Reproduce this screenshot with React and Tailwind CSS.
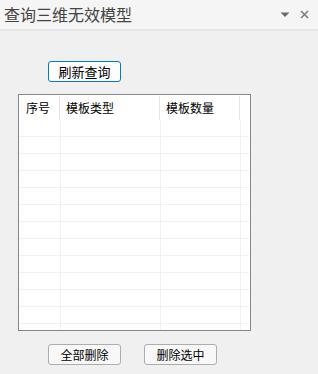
import React from "react";

const font = { fontFamily: '"Noto Sans CJK SC", "Noto Sans", sans-serif' };

function Btn({ children, primary, extra = "" }) {
  return (
    <div
      className={
        "h-[21px] w-[73px] flex items-center justify-center leading-none text-black rounded-[3px] " +
        (primary
          ? "border border-[#0078d7] bg-[#fdfdfd] text-[13px] "
          : "border border-[#adadad] bg-[#f8f8f8] text-[12px] ") +
        extra
      }
    >
      {children}
    </div>
  );
}

export default function App() {
  const rows = Array.from({ length: 13 });
  return (
    <div className="w-[318px] h-[374px] bg-[#f0f0f0] flex flex-col overflow-hidden" style={font}>
      <div className="h-[31px] shrink-0 bg-[#f5f5f5] border-b-2 border-[#e6e6e6] flex items-center pl-[4px] pr-[5px]">
        <div className="text-[16px] leading-none text-[#444] pb-[1px]">查询三维无效模型</div>
        <div className="flex-1" />
        <svg width="10" height="6" viewBox="0 0 10 6" className="mr-[10px] mt-[1px]">
          <path d="M0.5 0.5 L9.5 0.5 L5 5 Z" fill="#6b6b6b" />
        </svg>
        <svg width="9" height="9" viewBox="0 0 9 9" className="mr-[4px]">
          <path d="M1 1 L8 8 M8 1 L1 8" stroke="#7a7a7a" strokeWidth="1.5" />
        </svg>
      </div>

      <div className="ml-[48px] mt-[30px]">
        <Btn primary>刷新查询</Btn>
      </div>

      <div className="ml-[18px] mt-[12px] w-[233px] h-[237px] border border-[#828790] bg-white flex flex-col overflow-hidden shrink-0">
        <div className="h-[25px] shrink-0 flex text-[12px] leading-none text-black">
          <div className="w-[41px] flex items-center pl-[7px] relative">
            序号
            <div className="absolute right-0 top-[1px] bottom-0 w-px bg-[#e5e5e5]" />
          </div>
          <div className="w-[100px] flex items-center pl-[6px] relative">
            模板类型
            <div className="absolute right-0 top-[1px] bottom-0 w-px bg-[#e5e5e5]" />
          </div>
          <div className="w-[80px] flex items-center pl-[6px] relative">
            模板数量
            <div className="absolute right-0 top-[1px] bottom-0 w-px bg-[#e5e5e5]" />
          </div>
          <div className="flex-1" />
        </div>
        <div className="flex-1 flex flex-col">
          {rows.map((_, i) => (
            <div key={i} className="h-[17px] shrink-0 flex border-b border-[#f0f0f0] mr-[1px]">
              <div className="w-[42px] border-r border-[#f0f0f0]" />
              <div className="w-[100px] border-r border-[#f0f0f0]" />
              <div className="w-[80px] border-r border-[#f0f0f0]" />
              <div className="flex-1" />
            </div>
          ))}
        </div>
      </div>

      <div className="flex ml-[48px] mt-[13px] gap-[23px]">
        <Btn>全部删除</Btn>
        <Btn>删除选中</Btn>
      </div>
    </div>
  );
}
